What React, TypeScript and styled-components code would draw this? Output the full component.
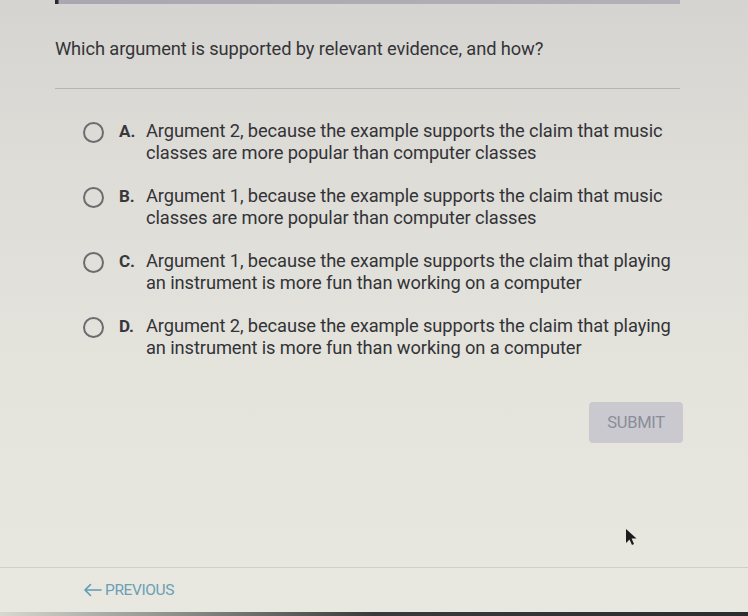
import React from 'react';
import styled, { createGlobalStyle } from 'styled-components';

const GlobalStyle = createGlobalStyle`
  html, body {
    margin: 0;
    padding: 0;
  }
  body {
    font-family: Roboto, "Liberation Sans", sans-serif;
  }
`;

const options = [
  {
    letter: 'A.',
    lines: ['Argument 2, because the example supports the claim that music', 'classes are more popular than computer classes'],
  },
  {
    letter: 'B.',
    lines: ['Argument 1, because the example supports the claim that music', 'classes are more popular than computer classes'],
  },
  {
    letter: 'C.',
    lines: ['Argument 1, because the example supports the claim that playing', 'an instrument is more fun than working on a computer'],
  },
  {
    letter: 'D.',
    lines: ['Argument 2, because the example supports the claim that playing', 'an instrument is more fun than working on a computer'],
  },
];

const App: React.FC = () => {
  return (
    <>
      <GlobalStyle />
      <Page>
        <TopStrip>
          <TopBar />
        </TopStrip>
        <Main>
          <Question>Which argument is supported by relevant evidence, and how?</Question>
          <Divider />
          <OptionList>
            {options.map((o) => (
              <Option key={o.letter}>
                <Radio />
                <Letter>{o.letter}</Letter>
                <OptionText>
                  {o.lines.map((l) => (
                    <div key={l}>{l}</div>
                  ))}
                </OptionText>
              </Option>
            ))}
          </OptionList>
          <Actions>
            <SubmitButton disabled>SUBMIT</SubmitButton>
          </Actions>
        </Main>
        <Cursor viewBox="0 0 12 18">
          <path d="M1 1 L1 15 L4.5 11.5 L7 17 L9 16 L6.6 10.6 L11.5 10.6 Z" fill="#1c1c1c" />
        </Cursor>
        <Footer>
          <PrevLink>
            <svg width="19" height="14" viewBox="0 0 19 14" fill="none" stroke="#5f9bb4" strokeWidth="1.6" strokeLinecap="round" strokeLinejoin="round">
              <path d="M18 7 H2 M7.5 1.5 L2 7 L7.5 12.5" />
            </svg>
            PREVIOUS
          </PrevLink>
        </Footer>
        <BottomEdge />
      </Page>
    </>
  );
};

const Page = styled.div`
  position: relative;
  width: 748px;
  height: 616px;
  overflow: hidden;
  display: flex;
  flex-direction: column;
  background: linear-gradient(180deg, #d5d4d0 0%, #dddcd7 25%, #e4e4dd 60%, #e8e8e0 100%);
`;

const TopStrip = styled.div`
  height: 4px;
  padding: 0 68px 0 55px;
`;

const TopBar = styled.div`
  height: 4px;
  background: linear-gradient(90deg, #2a2a2e 0px, #2a2a2e 3px, #a9a8b0 4px, #b2b1b8 100%);
`;

const Main = styled.div`
  flex: 1;
  padding: 0 65px 0 55px;
  display: flex;
  flex-direction: column;
`;

const Question = styled.div`
  margin-top: 34px;
  font-size: 18.3px;
  line-height: 22px;
  color: #343438;
  letter-spacing: -0.1px;
`;

const Divider = styled.div`
  margin: 28px 3px 0 0;
  height: 1px;
  background: #b5b5b2;
`;

const OptionList = styled.div`
  margin-top: 31px;
  padding-left: 28px;
  display: flex;
  flex-direction: column;
  gap: 21px;
`;

const Option = styled.div`
  display: flex;
  align-items: flex-start;
`;

const Radio = styled.div`
  width: 17px;
  height: 17px;
  border: 2px solid #6c6c70;
  border-radius: 50%;
  margin-top: 2px;
  flex-shrink: 0;
`;

const Letter = styled.div`
  width: 27px;
  margin-left: 15px;
  font-size: 17px;
  font-weight: 700;
  line-height: 22px;
  color: #37373c;
`;

const OptionText = styled.div`
  font-size: 18.3px;
  line-height: 22px;
  color: #333337;
  letter-spacing: -0.1px;
  white-space: nowrap;
`;

const Actions = styled.div`
  display: flex;
  justify-content: flex-end;
  margin-top: 43px;
`;

const SubmitButton = styled.button`
  width: 94px;
  height: 41px;
  border: none;
  border-radius: 4px;
  background: #c9c9cf;
  color: #8b8d98;
  font-family: Roboto, "Liberation Sans", sans-serif;
  font-size: 16.5px;
  letter-spacing: -0.3px;
`;

const Cursor = styled.svg`
  position: absolute;
  left: 625px;
  top: 528px;
  width: 12px;
  height: 18px;
`;

const Footer = styled.div`
  height: 44px;
  border-top: 1px solid #cfcfc8;
  padding: 0 0 0 83px;
  display: flex;
  align-items: center;
`;

const PrevLink = styled.div`
  display: flex;
  align-items: center;
  gap: 3px;
  font-size: 15.5px;
  color: #6b9fb6;
  letter-spacing: -0.4px;
`;

const BottomEdge = styled.div`
  height: 4px;
  background: linear-gradient(90deg, #d8d8d0 0%, #3a3a3c 50%, #2c2c2e 100%);
`;

export default App;
